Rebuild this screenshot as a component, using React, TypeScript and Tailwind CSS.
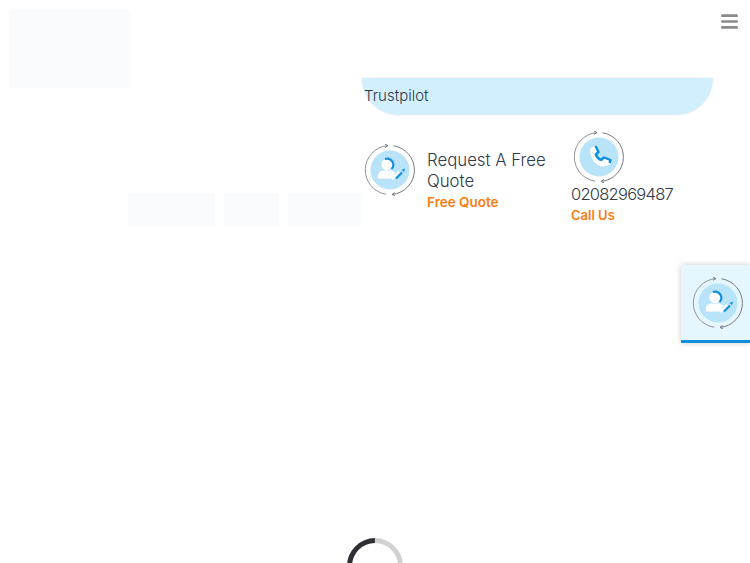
import { FaBars } from "react-icons/fa";

function RingIcon({ children }: { children: React.ReactNode }) {
  return (
    <svg width="52" height="52" viewBox="0 0 52 52" fill="none" className="shrink-0">
      <circle cx="26" cy="26" r="19.5" fill="#b8e3f9" />
      {/* arrows going round the disc */}
      <path d="M23.5 1.6 A24.5 24.5 0 0 0 22 50.2" stroke="#8f9498" strokeWidth="1" />
      <path d="M29.5 1.8 A24.5 24.5 0 0 1 28.5 50.4" stroke="#767c81" strokeWidth="1" />
      <path d="M21 0 L24 1.6 L21 3.4" stroke="#767c81" strokeWidth="1" />
      <path d="M31 48.6 L28 50.4 L31 52" stroke="#767c81" strokeWidth="1" />
      {children}
    </svg>
  );
}

function QuoteGlyph() {
  return (
    <g>
      <path d="M14 34.5 L14 31.5 C14 28 17 26.5 20 26.5 L27 26.5 C29 26.5 30.5 27.5 31 28.5 L27 34.5 Z" fill="#fff" />
      <circle cx="23" cy="20.5" r="5.5" fill="#fff" />
      <path d="M21 15 A6.5 6.5 0 0 1 29.5 20.5 A6.5 6.5 0 0 1 27.5 25" stroke="#0f8fdc" strokeWidth="2.2" />
      <path d="M28 35 L35 28" stroke="#fff" strokeWidth="2.6" />
      <path d="M32 34.5 L38 28.5" stroke="#0f8fdc" strokeWidth="2.2" />
      <path d="M37.5 26 L41 24.5 L40 28 Z" fill="#0f8fdc" />
    </g>
  );
}

function PhoneGlyph() {
  return (
    <g>
      <path d="M17.5 17 L23 15 L26 21 L24 24 C25 26 26.5 27.5 29 29 L32 27 L38 29 L37 33 C33 36.5 27 36 23 32.5 C18.5 28.5 16.5 22.5 17.5 17 Z" fill="#fff" />
      <path d="M22.5 15 L25.5 21 L22.8 23.5 C23.8 26 25.5 28 28 29 L31 26.5 L37.5 29 L36.5 32" stroke="#0f8fdc" strokeWidth="2.4" strokeLinejoin="round" />
    </g>
  );
}

function Placeholder({ className }: { className: string }) {
  return <div className={`bg-[#fafbfd] ${className}`} />;
}

export default function App() {
  return (
    <div className="relative w-[750px] h-[563px] overflow-hidden bg-white text-[#2f3a4a] font-['Inter','Noto_Sans',sans-serif] font-light">
      <div className="flex">
        <div className="w-[362px] shrink-0 pt-[10px] pl-[9px]">
          <Placeholder className="w-[122px] h-[78px]" />
          <div className="flex justify-end gap-[9px] mt-[105px]">
            <Placeholder className="w-[87px] h-[32px]" />
            <Placeholder className="w-[55px] h-[32px]" />
            <Placeholder className="w-[74px] h-[32px]" />
          </div>
        </div>

        <div className="flex-1">
          <div className="flex justify-end pr-[11px] pt-[12px] h-[78px]">
            <FaBars className="w-[19px] h-[19px] text-[#8a8a8a]" />
          </div>
          <div className="w-[351px] h-[37px] flex items-center pl-[2px] pb-[1px] bg-[#d2effd] rounded-b-[37px] shadow-[0_0_2px_rgba(0,0,0,0.12)] text-[15px]">
            Trustpilot
          </div>

          <div className="flex mt-[16px]">
            <div className="w-[209px] shrink-0 flex pl-[2px] pt-[13px]">
              <RingIcon>
                <QuoteGlyph />
              </RingIcon>
              <div className="ml-[11px] pt-[6px]">
                <div className="text-[16.8px] leading-[21px]">Request A Free<br />Quote</div>
                <div className="text-[13.5px] leading-[20px] font-semibold text-[#fb7d12]">Free Quote</div>
              </div>
            </div>
            <div>
              <div className="pl-[2px]">
                <RingIcon>
                  <PhoneGlyph />
                </RingIcon>
              </div>
              <div className="text-[16.5px] tracking-[-0.75px] leading-[20px] mt-[1px]">02082969487</div>
              <div className="text-[13px] leading-[20px] mt-[1px] font-semibold text-[#fb7d12]">Call Us</div>
            </div>
          </div>
        </div>
      </div>

      {/* sticky side tab */}
      <div className="absolute right-0 top-[265px] w-[69px] h-[78px] flex pl-[11px] pt-[12px] bg-[#e6f6fe] border-b-[3px] border-[#0d8fdc] shadow-[0_0_6px_rgba(0,0,0,0.2)]">
        <RingIcon>
          <QuoteGlyph />
        </RingIcon>
      </div>

      {/* page loader, cut off by the bottom edge */}
      <div className="absolute left-[347px] top-[538px] w-[56px] h-[56px] rounded-full border-[5px] border-[#d0d2d1] border-t-[#2f2f35] -rotate-45" />
    </div>
  );
}
